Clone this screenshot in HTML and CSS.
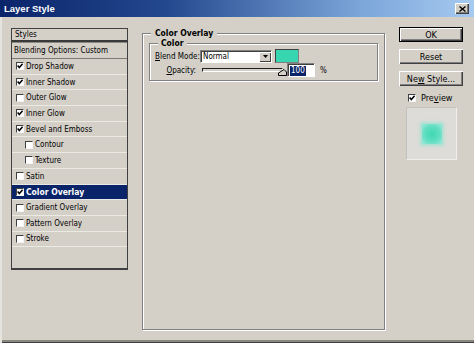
FILE: index.html
```html
<!DOCTYPE html>
<html>
<head>
<meta charset="utf-8">
<link rel="stylesheet" href="styles.css">
</head>
<body>
<div class="window">
  <div class="titlebar">
    <span class="title">Layer Style</span>
    <span class="close"><svg width="7" height="6" viewBox="0 0 7 6"><path d="M0.5 0.5 L6.5 5.5 M6.5 0.5 L0.5 5.5" stroke="#000" stroke-width="1.4" fill="none"/></svg></span>
  </div>
  <div class="body">
    <div class="list">
      <div class="list-head">Styles</div>
      <div class="list-blend">Blending Options: Custom</div>
      <div class="row"><span class="cb"><svg class="tick" viewBox="0 0 6 6"><path d="M0.6 2.6 L2.3 4.6 L5.6 0.8"/></svg></span>Drop Shadow</div>
      <div class="row"><span class="cb"><svg class="tick" viewBox="0 0 6 6"><path d="M0.6 2.6 L2.3 4.6 L5.6 0.8"/></svg></span>Inner Shadow</div>
      <div class="row"><span class="cb"></span>Outer Glow</div>
      <div class="row"><span class="cb"><svg class="tick" viewBox="0 0 6 6"><path d="M0.6 2.6 L2.3 4.6 L5.6 0.8"/></svg></span>Inner Glow</div>
      <div class="row"><span class="cb"><svg class="tick" viewBox="0 0 6 6"><path d="M0.6 2.6 L2.3 4.6 L5.6 0.8"/></svg></span>Bevel and Emboss</div>
      <div class="row sub"><span class="cb"></span>Contour</div>
      <div class="row sub"><span class="cb"></span>Texture</div>
      <div class="row"><span class="cb"></span>Satin</div>
      <div class="row selected"><span class="cb"><svg class="tick" viewBox="0 0 6 6"><path d="M0.6 2.6 L2.3 4.6 L5.6 0.8"/></svg></span>Color Overlay</div>
      <div class="row"><span class="cb"></span>Gradient Overlay</div>
      <div class="row"><span class="cb"></span>Pattern Overlay</div>
      <div class="row"><span class="cb"></span>Stroke</div>
      <div class="list-rest"></div>
    </div>

    <fieldset class="group outer">
      <legend>Color Overlay</legend>
      <fieldset class="group inner">
        <legend>Color</legend>
        <div class="form">
          <span class="lbl"><u>B</u>lend Mode:</span>
          <div class="ctrl">
            <div class="select"><span>Normal</span><span class="arrow"><svg width="5" height="3" viewBox="0 0 5 3"><path d="M0 0 H5 L2.5 3 Z" fill="#000"/></svg></span></div>
            <div class="swatch"></div>
          </div>
          <span class="lbl opl"><u>O</u>pacity:</span>
          <div class="ctrl">
            <div class="slider">
              <div class="track"></div>
              <svg class="thumb" width="9" height="7" viewBox="0 0 9 7"><path d="M0.5 6.5 V4 L6 0.5 L8.5 3 V6.5 Z" fill="#d4d0c8" stroke="#000" stroke-width="1"/></svg>
            </div>
            <div class="field"><span class="sel">100</span></div>
            <span class="pct">%</span>
          </div>
        </div>
      </fieldset>
    </fieldset>

    <div class="side">
      <div class="btn default"><span>OK</span></div>
      <div class="btn"><span>Reset</span></div>
      <div class="btn last"><span>Ne<u>w</u> Style...</span></div>
      <div class="preview-check"><span class="cb"><svg class="tick" viewBox="0 0 6 6"><path d="M0.6 2.6 L2.3 4.6 L5.6 0.8"/></svg></span><span>Pre<u>v</u>iew</span></div>
      <div class="preview"><div class="glow"></div></div>
    </div>
  </div>
</div>
</body>
</html>
```
FILE: styles.css
```css
body {
  margin: 0;
  font-family: "DejaVu Sans Condensed", "Liberation Sans", Arial, sans-serif;
  font-size: 8px;
  color: #000;
}

.window {
  width: 474px;
  height: 343px;
  box-sizing: border-box;
  background: #d4d0c8;
  display: flex;
  flex-direction: column;
  box-shadow: inset 0 -1px #404040, inset 0 -3px #8a8782;
}

.titlebar {
  height: 17px;
  flex: none;
  display: flex;
  align-items: center;
  justify-content: space-between;
  padding: 0 5px 0 4px;
  background: linear-gradient(90deg, #0a246a 0%, #24488e 35%, #7aa4d8 75%, #a6caf0 100%);
}

.title {
  color: #fff;
  font-family: "Liberation Sans", Arial, sans-serif;
  font-weight: bold;
  font-size: 9.5px;
}

.close {
  width: 14px;
  height: 11px;
  background: #d4d0c8;
  box-shadow: inset 1px 1px #fff, inset -1px -1px #404040, inset -2px -2px #808080;
  display: flex;
  align-items: center;
  justify-content: center;
}

.body {
  flex: 1;
  display: flex;
  align-items: flex-start;
  gap: 14px;
  padding: 11px 0 0 11px;
  box-shadow: inset 2px 0 #e6e4df;
}

/* styles list */
.list {
  width: 117px;
  height: 242px;
  box-sizing: border-box;
  border: 1px solid #404040;
  border-bottom-width: 2px;
  display: flex;
  flex-direction: column;
}

.list-head {
  height: 13px;
  box-sizing: border-box;
  padding-left: 3px;
  display: flex;
  align-items: center;
  border-bottom: 2px solid #3a3a3a;
}

.list-blend {
  height: 17px;
  box-sizing: border-box;
  padding-left: 2px;
  display: flex;
  align-items: center;
  border-top: 1px solid #8a8782;
  border-bottom: 1px solid #7d7b77;
}

.row {
  height: 15.7px;
  box-sizing: border-box;
  flex: none;
  display: flex;
  align-items: center;
  padding-left: 4px;
  border-bottom: 1px solid #ebe9e4;
}

.row.sub {
  padding-left: 13px;
}

.row .cb {
  margin-right: 2px;
}

.row.selected {
  background: #0a246a;
  color: #fff;
  font-weight: bold;
  font-size: 8.5px;
}

.list-rest {
  flex: 1;
}

.cb {
  width: 8px;
  height: 8px;
  box-sizing: border-box;
  flex: none;
  background: #fff;
  border: 1px solid;
  border-color: #404040 #f4f4f4 #f4f4f4 #404040;
  display: inline-flex;
  align-items: center;
  justify-content: center;
}

.tick {
  width: 6px;
  height: 6px;
  fill: none;
  stroke: #000;
  stroke-width: 1.5;
}

/* group boxes */
.group {
  margin: 0;
  min-width: 0;
  border: 1px solid #808080;
  box-shadow: 1px 1px 0 #fff, inset 1px 1px 0 #fff;
}

.group > legend {
  background: #d4d0c8;
  font-weight: bold;
  line-height: 10px;
}

.outer {
  width: 243px;
  height: 302px;
  box-sizing: border-box;
  padding: 0 6px;
}

.outer > legend {
  font-size: 8.5px;
  padding: 0 4px;
  margin-left: 2px;
}

.inner {
  padding: 1px 4px 3px 5px;
}

.inner > legend {
  font-size: 8.5px;
  padding: 0 3px;
  margin-left: 3px;
}

.form {
  display: grid;
  grid-template-columns: 43px auto;
  grid-auto-rows: 14px;
  column-gap: 2px;
  align-items: center;
}

.lbl {
  text-align: right;
  white-space: nowrap;
}

.opl {
  padding-right: 2px;
}

.ctrl {
  display: flex;
  align-items: center;
  height: 14px;
}

.select {
  width: 72px;
  height: 13px;
  box-sizing: border-box;
  background: #fff;
  border: 1px solid;
  border-color: #808080 #fff #fff #808080;
  box-shadow: inset 1px 1px #404040;
  display: flex;
  align-items: center;
  justify-content: space-between;
  padding: 1px 0 0 2px;
}

.arrow {
  width: 12px;
  height: 10px;
  box-sizing: border-box;
  background: #d4d0c8;
  box-shadow: inset 1px 1px #fff, inset -1px -1px #404040;
  display: flex;
  align-items: center;
  justify-content: center;
}

.swatch {
  width: 24px;
  height: 14px;
  box-sizing: border-box;
  margin-left: 3px;
  background: #38d6b0;
  border: 1px solid;
  border-color: #404040 #808080 #808080 #404040;
}

.slider {
  position: relative;
  width: 85px;
  height: 14px;
  margin-left: 2px;
}

.track {
  margin-top: 5px;
  margin-right: 4px;
  height: 4px;
  box-sizing: border-box;
  background: #d4d0c8;
  border: 1px solid;
  border-color: #202020 #fff #fff #202020;
}

.thumb {
  position: absolute;
  left: 76px;
  top: 6px;
}

.field {
  width: 28px;
  height: 14px;
  box-sizing: border-box;
  background: #fff;
  border: 1px solid;
  border-color: #808080 #fff #fff #808080;
  box-shadow: inset 1px 1px #404040;
  display: flex;
  align-items: center;
  padding: 1px 0 0 2px;
}

.sel {
  background: #0a246a;
  color: #fff;
  line-height: 10px;
  padding: 0 1px;
}

.pct {
  margin-left: 5px;
}

/* right column */
.side {
  width: 64px;
  display: flex;
  flex-direction: column;
  margin-top: -1px;
  font-size: 9px;
}

.btn {
  height: 15px;
  box-sizing: border-box;
  display: flex;
  align-items: center;
  justify-content: center;
  margin-bottom: 7px;
  box-shadow: inset 1px 1px #fff, inset -1px -1px #404040, inset -2px -2px #808080;
}

.btn.default {
  border: 1px solid #000;
}

.btn.last {
  margin-bottom: 5px;
}

.preview-check {
  height: 14px;
  display: flex;
  align-items: center;
  padding-left: 9px;
}

.preview-check .cb {
  margin-right: 5px;
}

.preview {
  width: 51px;
  height: 53px;
  box-sizing: border-box;
  margin: 2px 0 0 7px;
  background: #dedcd8;
  border: 1px solid;
  border-color: #c4c2bc #f0efec #f0efec #c4c2bc;
  display: flex;
  align-items: center;
  justify-content: center;
}

.glow {
  width: 20px;
  height: 20px;
  background: radial-gradient(circle, #3fd8b4 0%, #62dec2 55%, #9fe7d6 100%);
  box-shadow: 0 0 3px 2px rgba(150, 226, 208, 0.75);
  filter: blur(0.7px);
}
```
